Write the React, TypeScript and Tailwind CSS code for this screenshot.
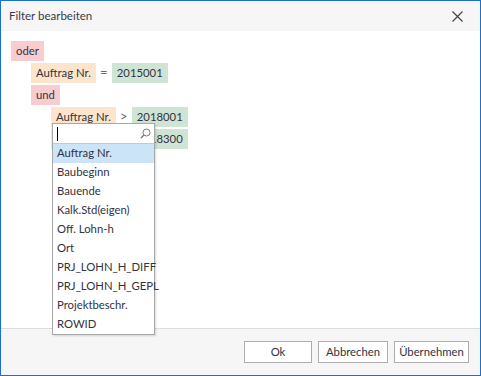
import React from 'react';

// Filter tree: chips per level with optional operator + value
type Row = { level: number; field?: string; op?: string; value?: string; logic?: string };

const ROWS: Row[] = [
  { level: 0, logic: 'oder' },
  { level: 1, field: 'Auftrag Nr.', op: '=', value: '2015001' },
  { level: 1, logic: 'und' },
  { level: 2, field: 'Auftrag Nr.', op: '>', value: '2018001' },
  { level: 2, field: 'Auftrag Nr.', op: '<', value: '2018300' },
];

const FIELDS = [
  'Auftrag Nr.',
  'Baubeginn',
  'Bauende',
  'Kalk.Std(eigen)',
  'Off. Lohn-h',
  'Ort',
  'PRJ_LOHN_H_DIFF',
  'PRJ_LOHN_H_GEPL',
  'Projektbeschr.',
  'ROWID',
];

const indent = ['pl-[10px]', 'pl-[30px]', 'pl-[50px]'];

const App = () => {
  return (
    <div
      className="w-[481px] h-[376px] border border-[#1a6fcf] bg-white flex flex-col text-[11.3px] text-[#333340] relative overflow-hidden"
      style={{ fontFamily: 'Lato, "Liberation Sans", Arial, sans-serif' }}
    >
      {/* Title bar */}
      <div className="h-[30px] bg-[#f6f6f6] flex items-center justify-between pl-[8px] pr-[17px] shrink-0">
        <span className="text-[11.5px] text-[#3a3a4a]">Filter bearbeiten</span>
        <svg width="11" height="11" viewBox="0 0 11 11" className="text-[#444]">
          <path d="M0.5 0.5 L10.5 10.5 M10.5 0.5 L0.5 10.5" stroke="currentColor" strokeWidth="1.2" />
        </svg>
      </div>

      {/* Tree */}
      <div className="flex-1 pt-[10px] flex flex-col gap-[2px]">
        {ROWS.map((r, i) => (
          <div key={i} className={`flex items-center h-[20px] ${indent[r.level]}`}>
            {r.logic ? (
              <span className="h-[20px] px-[5px] flex items-center bg-[#f9cdd0]">{r.logic}</span>
            ) : (
              <>
                <span className="h-[20px] px-[5px] flex items-center bg-[#fde5cd]">{r.field}</span>
                <span className="w-[16px] text-center text-[#666] text-[13px]">{r.op}</span>
                <span className="h-[20px] px-[5px] flex items-center bg-[#cfe4d4]">{r.value}</span>
              </>
            )}
          </div>
        ))}
      </div>

      {/* Footer */}
      <div className="h-[47px] shrink-0 bg-[#f6f6f6] border-t border-[#dcdcdc] flex items-start justify-end pt-[12px] pr-[11px] gap-[6px]">
        <button className="w-[68px] h-[22px] bg-white border border-[#adadad]">Ok</button>
        <button className="w-[70px] h-[22px] bg-white border border-[#adadad]">Abbrechen</button>
        <button className="w-[75px] h-[22px] bg-white border border-[#adadad]">Übernehmen</button>
      </div>

      {/* Field picker dropdown */}
      <div className="absolute left-[51px] top-[122px] w-[103px] bg-white border border-[#a8a8a8] shadow-[1px_1px_2px_rgba(0,0,0,0.15)] flex flex-col">
        <div className="h-[20px] border-b border-[#c8c8c8] flex items-center justify-between pl-[4px] pr-[3px]">
          <span className="w-[1px] h-[14px] bg-black" />
          <svg width="11" height="11" viewBox="0 0 11 11" className="text-[#777]">
            <circle cx="6.5" cy="4.5" r="3.5" fill="none" stroke="currentColor" strokeWidth="1" />
            <path d="M4 7 L0.8 10.2" stroke="currentColor" strokeWidth="1.3" />
          </svg>
        </div>
        {FIELDS.map((f, i) => (
          <div
            key={f}
            className={`h-[19px] flex items-center pl-[4px] whitespace-nowrap ${i === 0 ? 'bg-[#cce4f7]' : ''}`}
          >
            {f}
          </div>
        ))}
      </div>
    </div>
  );
};

export default App;
